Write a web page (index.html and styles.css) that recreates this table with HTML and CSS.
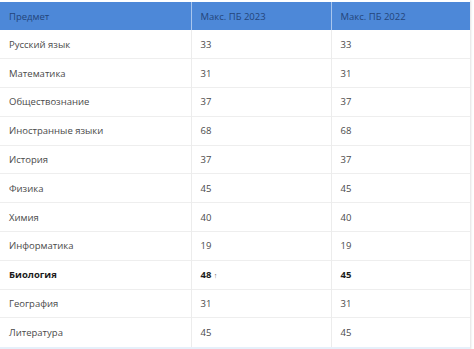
FILE: index.html
```html
<!DOCTYPE html>
<html lang="ru">
<head>
<meta charset="utf-8">
<link rel="stylesheet" href="styles.css">
</head>
<body>
<div class="wrap">
<table class="tbl">
<colgroup><col class="c1"><col class="c2"><col class="c3"></colgroup>
<thead>
<tr><th>Предмет</th><th>Макс. ПБ 2023</th><th>Макс. ПБ 2022</th></tr>
</thead>
<tbody>
<tr><td>Русский язык</td><td>33</td><td>33</td></tr>
<tr><td>Математика</td><td>31</td><td>31</td></tr>
<tr><td>Обществознание</td><td>37</td><td>37</td></tr>
<tr><td>Иностранные языки</td><td>68</td><td>68</td></tr>
<tr><td>История</td><td>37</td><td>37</td></tr>
<tr><td>Физика</td><td>45</td><td>45</td></tr>
<tr><td>Химия</td><td>40</td><td>40</td></tr>
<tr><td>Информатика</td><td>19</td><td>19</td></tr>
<tr class="bold"><td>Биология</td><td>48 <span class="up">↑</span></td><td>45</td></tr>
<tr><td>География</td><td>31</td><td>31</td></tr>
<tr><td>Литература</td><td>45</td><td>45</td></tr>
</tbody>
</table>
</div>
</body>
</html>
```
FILE: styles.css
```css
html, body {
  margin: 0;
  padding: 0;
  background: #fff;
}
.wrap {
  width: 470px;
  padding-top: 2px;
  border-bottom: 3px solid #e6f0fa;
  box-shadow: 1px 0 2px rgba(0,0,0,0.12);
}
.tbl {
  width: 470px;
  border-collapse: collapse;
  font-family: "Open Sans", "Noto Sans", sans-serif;
  font-size: 9.5px;
  table-layout: fixed;
}
.c1 { width: 191px; }
.c2 { width: 140px; }
.c3 { width: 139px; }
.tbl th {
  background: #4d88d8;
  color: #24457a;
  font-weight: 400;
  text-align: left;
  height: 28px;
  padding: 0 0 0 9px;
  border-left: 1px solid #a9c6ee;
  box-sizing: border-box;
}
.tbl th:first-child { border-left: none; }
.tbl td {
  height: 28.8px;
  padding: 0 0 0 9px;
  color: #4a4a4a;
  border-top: 1px solid #eeeeee;
  border-left: 1px solid #ececec;
  box-sizing: border-box;
}
.tbl td:first-child { border-left: none; }
.tbl tbody tr:first-child td { border-top: none; }
.bold td {
  font-weight: 700;
  color: #1c1c1c;
}
.up {
  font-size: 7px;
  color: #555;
}
```
